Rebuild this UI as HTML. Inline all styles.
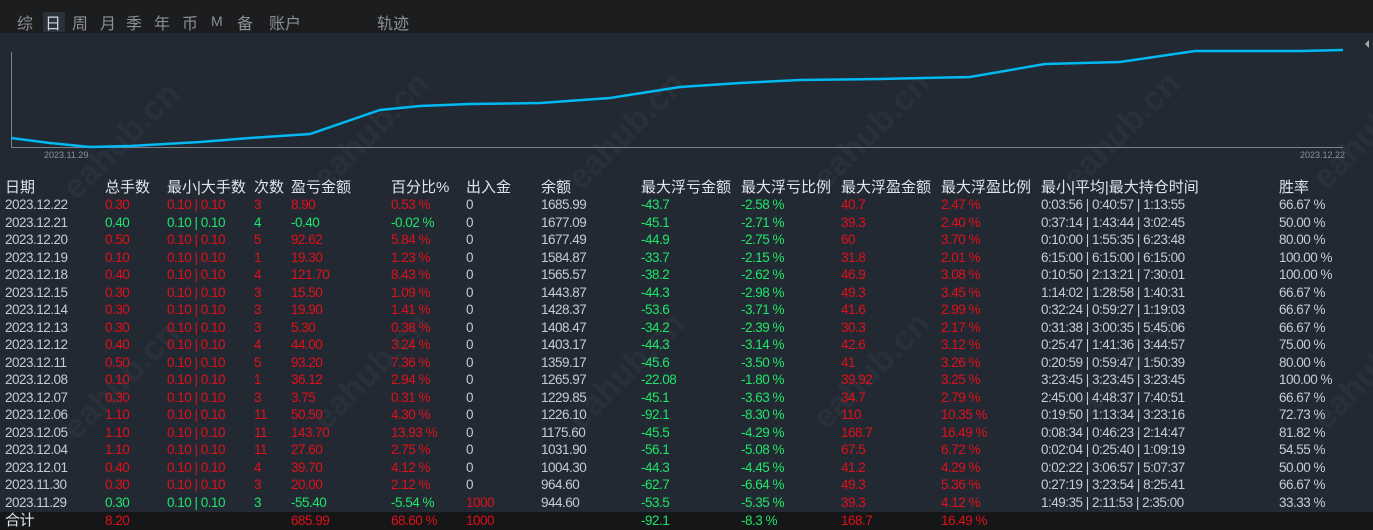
<!DOCTYPE html>
<html><head><meta charset="utf-8"><style>
*{margin:0;padding:0;box-sizing:border-box}
body{width:1373px;height:530px;background:#232932;overflow:hidden;position:relative;font-family:"Liberation Sans","Noto Sans CJK SC",sans-serif;font-size:13px;color:#c3ccd8}
#top{position:absolute;left:0;top:0;width:1373px;height:33px;background:#1c1d1e}
.tab{position:absolute;top:10px;font-size:16px;color:#8c8f94}
.sel{position:absolute;left:43px;top:12px;width:22px;height:20px;background:#2a3138}
.wm{position:absolute;font-size:34px;font-weight:bold;color:rgba(255,255,255,0.035);transform:rotate(-45deg);transform-origin:left top;white-space:nowrap}
.hd{position:absolute;top:176px;left:0;width:1373px;height:20px;font-size:15px;color:#dfe4ec}
.r{position:absolute;left:0;width:1373px;height:17.5px;line-height:17.5px;letter-spacing:-0.5px;font-size:13.5px}
.r span,.hd span{position:absolute;white-space:nowrap}
.a{left:5px}.b{left:105px}.c{left:167px}.d{left:254px}.e{left:291px}.f{left:391px}.g{left:466px}.h{left:541px}.i{left:641px}.j{left:741px}.k{left:841px}.l{left:941px}.m{left:1041px}.n{left:1279px}
.R{color:#e0101a}.G{color:#1ee66a}
#tot{position:absolute;left:0;top:512px;width:1373px;height:18px;background:#151617}
</style></head><body>
<div id="top"></div>
<div class="sel"></div>
<span class="tab" style="left:17px">综</span>
<span class="tab" style="left:45px;color:#cdd6e0">日</span>
<span class="tab" style="left:72px">周</span>
<span class="tab" style="left:100px">月</span>
<span class="tab" style="left:126px">季</span>
<span class="tab" style="left:154px">年</span>
<span class="tab" style="left:182px">币</span>
<span class="tab" style="left:211px;font-size:14px;top:13px">M</span>
<span class="tab" style="left:237px">备</span>
<span class="tab" style="left:269px">账户</span>
<span class="tab" style="left:377px">轨迹</span>
<div style="position:absolute;left:1365px;top:40px;width:0;height:0;border-top:4px solid transparent;border-bottom:4px solid transparent;border-right:4px solid #aaa"></div>

<div class="wm" style="left:55px;top:180px">eahub.cn</div>
<div class="wm" style="left:305px;top:170px">eahub.cn</div>
<div class="wm" style="left:560px;top:170px">eahub.cn</div>
<div class="wm" style="left:805px;top:170px">eahub.cn</div>
<div class="wm" style="left:1055px;top:170px">eahub.cn</div>
<div class="wm" style="left:1305px;top:170px">eahub.cn</div>
<div class="wm" style="left:55px;top:420px">eahub.cn</div>
<div class="wm" style="left:305px;top:410px">eahub.cn</div>
<div class="wm" style="left:560px;top:410px">eahub.cn</div>
<div class="wm" style="left:805px;top:410px">eahub.cn</div>
<div class="wm" style="left:1055px;top:410px">eahub.cn</div>
<div class="wm" style="left:1305px;top:410px">eahub.cn</div>

<svg style="position:absolute;left:0;top:0" width="1373" height="170">
<path d="M11.5 52V147.5H1343" fill="none" stroke="#7c8087" stroke-width="1"/>
<polyline fill="none" stroke="#00b8f2" stroke-width="2.5" points="11,138 50,143 90,147 130,146 200,142 250,138 310,134 380,110 420,106 470,104 540,103 610,98 680,87 740,83 800,80 880,79 970,77 1045,64 1120,62 1195,51 1300,51 1343,50"/>
<text x="44" y="158" font-size="9" fill="#8a9099" font-family="Liberation Sans">2023.11.29</text>
<text x="1300" y="158" font-size="9" fill="#8a9099" font-family="Liberation Sans">2023.12.22</text>
</svg>

<div class="hd"><span class="a">日期</span><span class="b">总手数</span><span class="c">最小|大手数</span><span class="d">次数</span><span class="e">盈亏金额</span><span class="f">百分比%</span><span class="g">出入金</span><span class="h">余额</span><span class="i">最大浮亏金额</span><span class="j">最大浮亏比例</span><span class="k">最大浮盈金额</span><span class="l">最大浮盈比例</span><span class="m">最小|平均|最大持仓时间</span><span class="n">胜率</span></div>

<div class="r" style="top:196px"><span class="a">2023.12.22</span><span class="b R">0.30</span><span class="c R">0.10 | 0.10</span><span class="d R">3</span><span class="e R">8.90</span><span class="f R">0.53 %</span><span class="g">0</span><span class="h">1685.99</span><span class="i G">-43.7</span><span class="j G">-2.58 %</span><span class="k R">40.7</span><span class="l R">2.47 %</span><span class="m">0:03:56 | 0:40:57 | 1:13:55</span><span class="n">66.67 %</span></div>
<div class="r" style="top:213.5px"><span class="a">2023.12.21</span><span class="b G">0.40</span><span class="c G">0.10 | 0.10</span><span class="d G">4</span><span class="e G">-0.40</span><span class="f G">-0.02 %</span><span class="g">0</span><span class="h">1677.09</span><span class="i G">-45.1</span><span class="j G">-2.71 %</span><span class="k R">39.3</span><span class="l R">2.40 %</span><span class="m">0:37:14 | 1:43:44 | 3:02:45</span><span class="n">50.00 %</span></div>
<div class="r" style="top:231px"><span class="a">2023.12.20</span><span class="b R">0.50</span><span class="c R">0.10 | 0.10</span><span class="d R">5</span><span class="e R">92.62</span><span class="f R">5.84 %</span><span class="g">0</span><span class="h">1677.49</span><span class="i G">-44.9</span><span class="j G">-2.75 %</span><span class="k R">60</span><span class="l R">3.70 %</span><span class="m">0:10:00 | 1:55:35 | 6:23:48</span><span class="n">80.00 %</span></div>
<div class="r" style="top:248.5px"><span class="a">2023.12.19</span><span class="b R">0.10</span><span class="c R">0.10 | 0.10</span><span class="d R">1</span><span class="e R">19.30</span><span class="f R">1.23 %</span><span class="g">0</span><span class="h">1584.87</span><span class="i G">-33.7</span><span class="j G">-2.15 %</span><span class="k R">31.8</span><span class="l R">2.01 %</span><span class="m">6:15:00 | 6:15:00 | 6:15:00</span><span class="n">100.00 %</span></div>
<div class="r" style="top:266px"><span class="a">2023.12.18</span><span class="b R">0.40</span><span class="c R">0.10 | 0.10</span><span class="d R">4</span><span class="e R">121.70</span><span class="f R">8.43 %</span><span class="g">0</span><span class="h">1565.57</span><span class="i G">-38.2</span><span class="j G">-2.62 %</span><span class="k R">46.9</span><span class="l R">3.08 %</span><span class="m">0:10:50 | 2:13:21 | 7:30:01</span><span class="n">100.00 %</span></div>
<div class="r" style="top:283.5px"><span class="a">2023.12.15</span><span class="b R">0.30</span><span class="c R">0.10 | 0.10</span><span class="d R">3</span><span class="e R">15.50</span><span class="f R">1.09 %</span><span class="g">0</span><span class="h">1443.87</span><span class="i G">-44.3</span><span class="j G">-2.98 %</span><span class="k R">49.3</span><span class="l R">3.45 %</span><span class="m">1:14:02 | 1:28:58 | 1:40:31</span><span class="n">66.67 %</span></div>
<div class="r" style="top:301px"><span class="a">2023.12.14</span><span class="b R">0.30</span><span class="c R">0.10 | 0.10</span><span class="d R">3</span><span class="e R">19.90</span><span class="f R">1.41 %</span><span class="g">0</span><span class="h">1428.37</span><span class="i G">-53.6</span><span class="j G">-3.71 %</span><span class="k R">41.6</span><span class="l R">2.99 %</span><span class="m">0:32:24 | 0:59:27 | 1:19:03</span><span class="n">66.67 %</span></div>
<div class="r" style="top:318.5px"><span class="a">2023.12.13</span><span class="b R">0.30</span><span class="c R">0.10 | 0.10</span><span class="d R">3</span><span class="e R">5.30</span><span class="f R">0.38 %</span><span class="g">0</span><span class="h">1408.47</span><span class="i G">-34.2</span><span class="j G">-2.39 %</span><span class="k R">30.3</span><span class="l R">2.17 %</span><span class="m">0:31:38 | 3:00:35 | 5:45:06</span><span class="n">66.67 %</span></div>
<div class="r" style="top:336px"><span class="a">2023.12.12</span><span class="b R">0.40</span><span class="c R">0.10 | 0.10</span><span class="d R">4</span><span class="e R">44.00</span><span class="f R">3.24 %</span><span class="g">0</span><span class="h">1403.17</span><span class="i G">-44.3</span><span class="j G">-3.14 %</span><span class="k R">42.6</span><span class="l R">3.12 %</span><span class="m">0:25:47 | 1:41:36 | 3:44:57</span><span class="n">75.00 %</span></div>
<div class="r" style="top:353.5px"><span class="a">2023.12.11</span><span class="b R">0.50</span><span class="c R">0.10 | 0.10</span><span class="d R">5</span><span class="e R">93.20</span><span class="f R">7.36 %</span><span class="g">0</span><span class="h">1359.17</span><span class="i G">-45.6</span><span class="j G">-3.50 %</span><span class="k R">41</span><span class="l R">3.26 %</span><span class="m">0:20:59 | 0:59:47 | 1:50:39</span><span class="n">80.00 %</span></div>
<div class="r" style="top:371px"><span class="a">2023.12.08</span><span class="b R">0.10</span><span class="c R">0.10 | 0.10</span><span class="d R">1</span><span class="e R">36.12</span><span class="f R">2.94 %</span><span class="g">0</span><span class="h">1265.97</span><span class="i G">-22.08</span><span class="j G">-1.80 %</span><span class="k R">39.92</span><span class="l R">3.25 %</span><span class="m">3:23:45 | 3:23:45 | 3:23:45</span><span class="n">100.00 %</span></div>
<div class="r" style="top:388.5px"><span class="a">2023.12.07</span><span class="b R">0.30</span><span class="c R">0.10 | 0.10</span><span class="d R">3</span><span class="e R">3.75</span><span class="f R">0.31 %</span><span class="g">0</span><span class="h">1229.85</span><span class="i G">-45.1</span><span class="j G">-3.63 %</span><span class="k R">34.7</span><span class="l R">2.79 %</span><span class="m">2:45:00 | 4:48:37 | 7:40:51</span><span class="n">66.67 %</span></div>
<div class="r" style="top:406px"><span class="a">2023.12.06</span><span class="b R">1.10</span><span class="c R">0.10 | 0.10</span><span class="d R">11</span><span class="e R">50.50</span><span class="f R">4.30 %</span><span class="g">0</span><span class="h">1226.10</span><span class="i G">-92.1</span><span class="j G">-8.30 %</span><span class="k R">110</span><span class="l R">10.35 %</span><span class="m">0:19:50 | 1:13:34 | 3:23:16</span><span class="n">72.73 %</span></div>
<div class="r" style="top:423.5px"><span class="a">2023.12.05</span><span class="b R">1.10</span><span class="c R">0.10 | 0.10</span><span class="d R">11</span><span class="e R">143.70</span><span class="f R">13.93 %</span><span class="g">0</span><span class="h">1175.60</span><span class="i G">-45.5</span><span class="j G">-4.29 %</span><span class="k R">168.7</span><span class="l R">16.49 %</span><span class="m">0:08:34 | 0:46:23 | 2:14:47</span><span class="n">81.82 %</span></div>
<div class="r" style="top:441px"><span class="a">2023.12.04</span><span class="b R">1.10</span><span class="c R">0.10 | 0.10</span><span class="d R">11</span><span class="e R">27.60</span><span class="f R">2.75 %</span><span class="g">0</span><span class="h">1031.90</span><span class="i G">-56.1</span><span class="j G">-5.08 %</span><span class="k R">67.5</span><span class="l R">6.72 %</span><span class="m">0:02:04 | 0:25:40 | 1:09:19</span><span class="n">54.55 %</span></div>
<div class="r" style="top:458.5px"><span class="a">2023.12.01</span><span class="b R">0.40</span><span class="c R">0.10 | 0.10</span><span class="d R">4</span><span class="e R">39.70</span><span class="f R">4.12 %</span><span class="g">0</span><span class="h">1004.30</span><span class="i G">-44.3</span><span class="j G">-4.45 %</span><span class="k R">41.2</span><span class="l R">4.29 %</span><span class="m">0:02:22 | 3:06:57 | 5:07:37</span><span class="n">50.00 %</span></div>
<div class="r" style="top:476px"><span class="a">2023.11.30</span><span class="b R">0.30</span><span class="c R">0.10 | 0.10</span><span class="d R">3</span><span class="e R">20.00</span><span class="f R">2.12 %</span><span class="g">0</span><span class="h">964.60</span><span class="i G">-62.7</span><span class="j G">-6.64 %</span><span class="k R">49.3</span><span class="l R">5.36 %</span><span class="m">0:27:19 | 3:23:54 | 8:25:41</span><span class="n">66.67 %</span></div>
<div class="r" style="top:493.5px"><span class="a">2023.11.29</span><span class="b G">0.30</span><span class="c G">0.10 | 0.10</span><span class="d G">3</span><span class="e G">-55.40</span><span class="f G">-5.54 %</span><span class="g R">1000</span><span class="h">944.60</span><span class="i G">-53.5</span><span class="j G">-5.35 %</span><span class="k R">39.3</span><span class="l R">4.12 %</span><span class="m">1:49:35 | 2:11:53 | 2:35:00</span><span class="n">33.33 %</span></div>
<div id="tot"></div>
<div class="r" style="top:512px;height:18px;line-height:18px"><span class="a" style="font-size:15px;color:#dfe4ec">合计</span><span class="b R">8.20</span><span class="e R">685.99</span><span class="f R">68.60 %</span><span class="g R">1000</span><span class="i G">-92.1</span><span class="j G">-8.3 %</span><span class="k R">168.7</span><span class="l R">16.49 %</span></div>
</body></html>
